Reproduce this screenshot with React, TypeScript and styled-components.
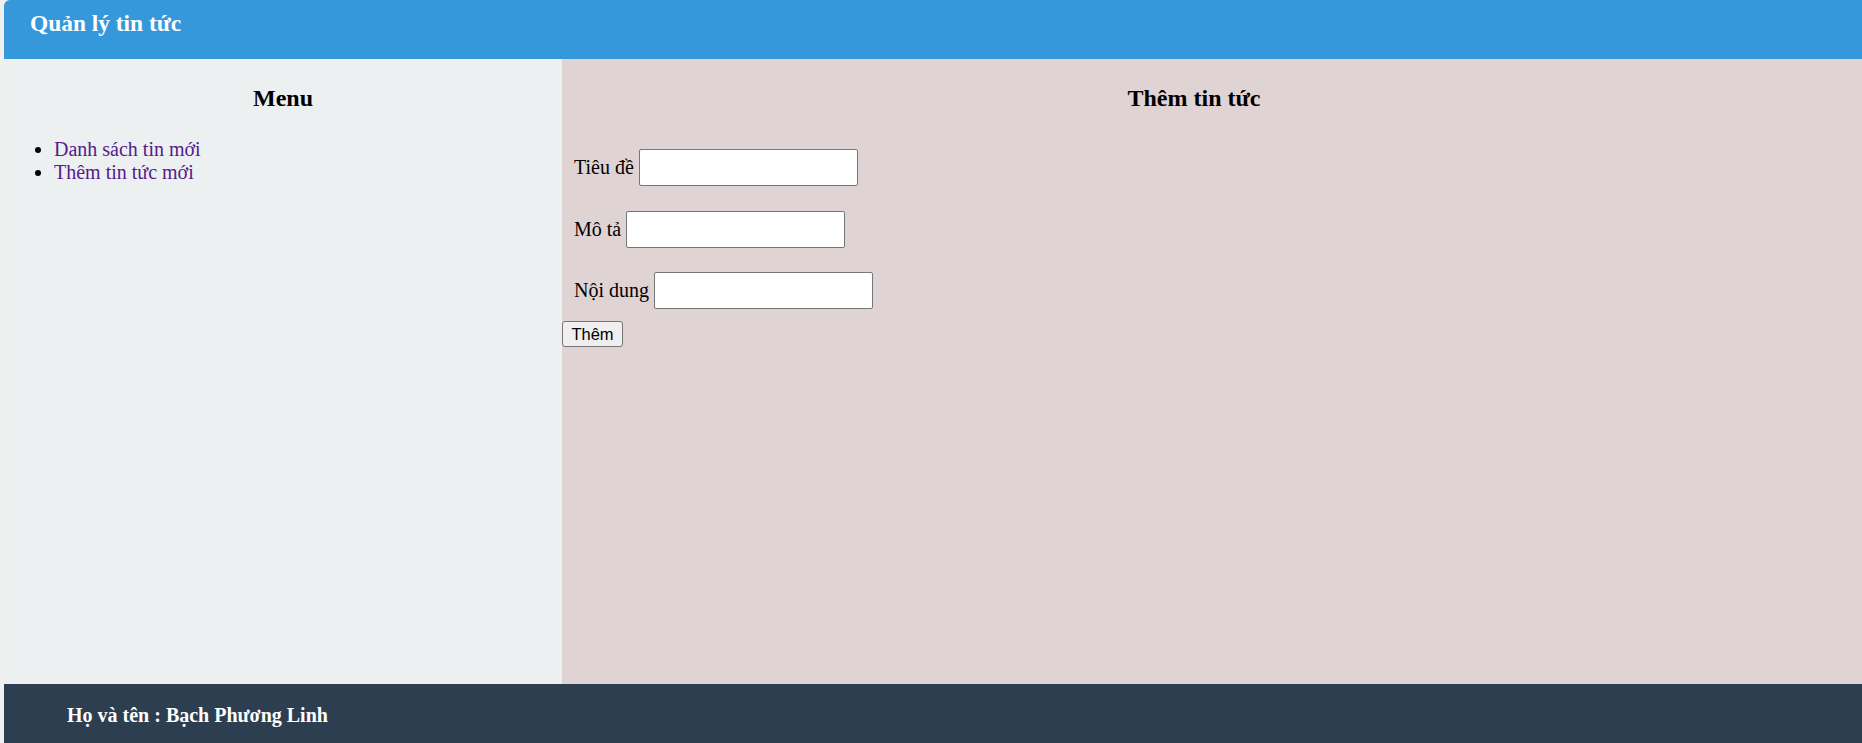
import React from "react";
import styled, { createGlobalStyle } from "styled-components";

const GlobalStyle = createGlobalStyle`
  html, body {
    margin: 0;
    padding: 0;
  }
  body {
    background-color: #f0f0f0;
    font-family: "Liberation Serif", "Times New Roman", serif;
    overflow: hidden;
  }
`;

const Page = styled.div`
  margin-left: 4px;
  display: flex;
  flex-direction: column;
  min-height: 743px;
`;

const Header = styled.header`
  height: 59px;
  box-sizing: border-box;
  padding: 10px 26px 0;
  background-color: #3498db;
  border-top-left-radius: 6px;
`;

const Title = styled.h3`
  margin: 0;
  font-size: 23.4px;
  font-weight: bold;
  color: #ffffff;
`;

const Main = styled.main`
  display: grid;
  grid-template-columns: 558px 1fr;
  height: 625px;
`;

const Panel = styled.section<{ $bg: string }>`
  background-color: ${(p) => p.$bg};
`;

const PanelTitle = styled.h2<{ $shift?: number }>`
  margin: 26px 0 0;
  padding-right: ${(p) => p.$shift ?? 0}px;
  text-align: center;
  font-size: 24px;
  font-weight: bold;
  color: #000;
`;

const MenuList = styled.ul`
  margin: 26px 0 0;
  padding-left: 50px;
  font-size: 20px;
  line-height: 23px;
`;

const MenuLink = styled.a`
  color: #551a8b;
  text-decoration: none;
`;

const Form = styled.form`
  margin-top: 37px;
  display: flex;
  flex-direction: column;
  align-items: flex-start;
`;

const Row = styled.div`
  display: flex;
  align-items: center;
  gap: 5px;
  padding-left: 12px;
  margin-bottom: 24.5px;
  font-size: 20px;
  color: #000;

  &:last-of-type {
    margin-bottom: 12px;
  }
`;

const Input = styled.input`
  width: 219px;
  height: 37px;
  box-sizing: border-box;
  border: 1px solid #767676;
  border-radius: 2px;
  background: #fff;
  padding: 2px 4px;
  font-size: 16px;
`;

const Button = styled.button`
  height: 26px;
  width: 61px;
  box-sizing: border-box;
  padding: 0;
  border: 1px solid #767676;
  border-radius: 3px;
  background-color: #efefef;
  font-family: "Liberation Sans", Arial, sans-serif;
  font-size: 16.5px;
  color: #000;
`;

const Footer = styled.footer`
  height: 59px;
  box-sizing: border-box;
  padding: 20px 63px 0;
  background-color: #2c3e50;
  color: #ffffff;
  font-size: 20px;
  font-weight: bold;
`;

export default function App() {
  return (
    <>
      <GlobalStyle />
      <Page>
        <Header>
          <Title>Quản lý tin tức</Title>
        </Header>
        <Main>
          <Panel $bg="#ecf0f1">
            <PanelTitle $shift={-5}>Menu</PanelTitle>
            <MenuList>
              <li>
                <MenuLink href="#">Danh sách tin mới</MenuLink>
              </li>
              <li>
                <MenuLink href="#">Thêm tin tức mới</MenuLink>
              </li>
            </MenuList>
          </Panel>
          <Panel $bg="#e0d3d3">
            <PanelTitle $shift={36}>Thêm tin tức</PanelTitle>
            <Form onSubmit={(e) => e.preventDefault()}>
              <Row>
                <label>Tiêu đề</label>
                <Input type="text" />
              </Row>
              <Row>
                <label>Mô tả</label>
                <Input type="text" />
              </Row>
              <Row>
                <label>Nội dung</label>
                <Input type="text" />
              </Row>
              <Button type="submit">Thêm</Button>
            </Form>
          </Panel>
        </Main>
        <Footer>Họ và tên : Bạch Phương Linh</Footer>
      </Page>
    </>
  );
}
